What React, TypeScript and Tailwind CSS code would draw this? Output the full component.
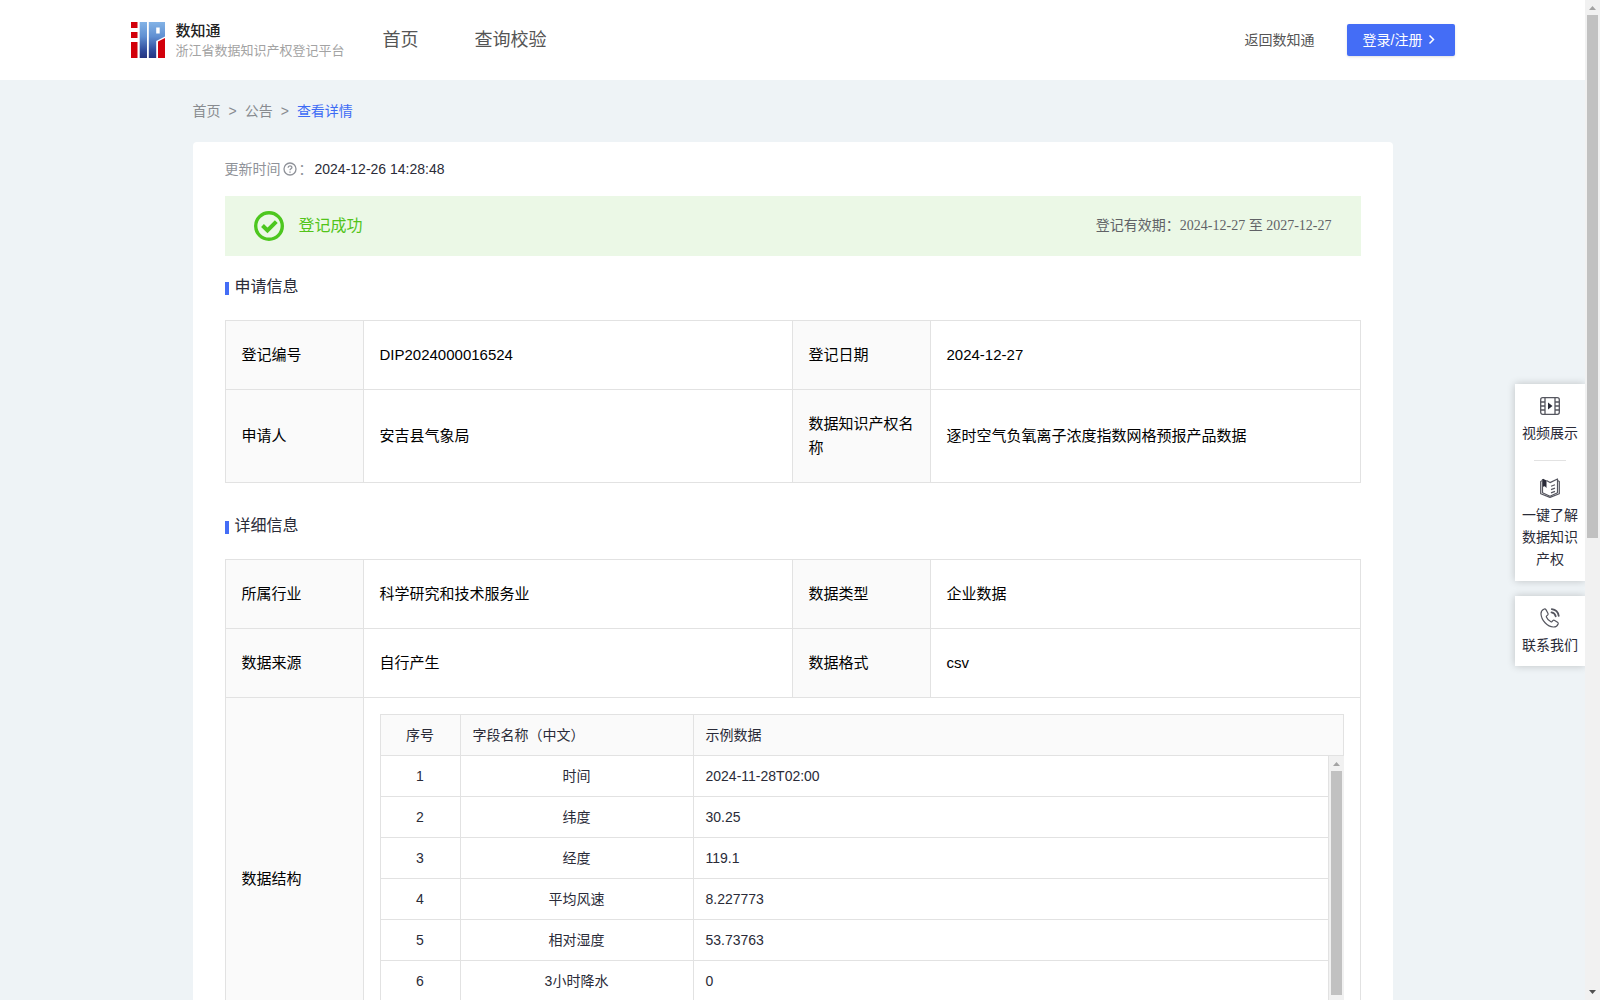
import React from 'react';

const font = "font-['Liberation_Sans','Noto_Sans_CJK_SC',sans-serif]";

function Logo() {
  return (
    <svg viewBox="0 0 34 36" className="h-9 w-[34px] shrink-0" aria-hidden="true">
      <defs>
        <linearGradient id="logoBlue" x1="0" y1="0" x2="0" y2="36" gradientUnits="userSpaceOnUse">
          <stop offset="0" stopColor="#83b3e6" />
          <stop offset="0.4" stopColor="#6090d2" />
          <stop offset="0.8" stopColor="#2f4a9b" />
          <stop offset="1" stopColor="#24337f" />
        </linearGradient>
      </defs>
      <path d="M0 0h6.500v6H0zM0 10h6.500v6H0zM0 20h6.500v16H0z" fill="#d2000b" />
      <path d="M8.700 0h7.300v36H8.700z" fill="url(#logoBlue)" />
      <path fillRule="evenodd" d="M17.800 0H34v14.500L25.200 19v17h-7.400zM25.200 5.500v6h3.500V5.500z" fill="url(#logoBlue)" />
      <path d="M27 19.500l7-3.500v20h-7z" fill="#d2000b" />
    </svg>
  );
}

function QuestionIcon() {
  return (
    <svg viewBox="0 0 14 14" className="h-3.5 w-3.5 shrink-0" fill="none" stroke="#8f9299" strokeWidth="1.300" aria-hidden="true">
      <circle cx="7" cy="7" r="6" />
      <path d="M5.100 5.700c0-2.400 3.800-2.400 3.800-.2 0 1.300-1.900 1.300-1.900 2.700" />
      <path d="M7 9.400v1.300" />
    </svg>
  );
}

function SuccessIcon() {
  return (
    <svg viewBox="0 0 30 30" className="h-[30px] w-[30px] shrink-0" fill="none" stroke="#4dc71f" aria-hidden="true">
      <circle cx="15" cy="15" r="13.300" strokeWidth="3.400" />
      <path d="M8.500 14.500l5 5 8.800-8.800" strokeWidth="4" />
    </svg>
  );
}

function FilmIcon() {
  return (
    <svg viewBox="0 0 20 20" className="h-5 w-5" fill="none" stroke="#55565f" strokeWidth="1.300" aria-hidden="true">
      <rect x="0.700" y="1.700" width="18.600" height="16.600" rx="2" />
      <path d="M5 1.700v16.600M15 1.700v16.600M0.700 6H5M0.700 10H5M0.700 14H5M15 6h4.300M15 10h4.300M15 14h4.300" />
      <path d="M8 6.500v7l4.500-3.500z" fill="#2a2b38" stroke="none" />
    </svg>
  );
}

function BookIcon() {
  return (
    <svg viewBox="0 0 20 20" className="h-5 w-5" fill="none" stroke="#55565f" strokeWidth="1.200" strokeLinejoin="round" aria-hidden="true">
      <path d="M6.500 2.600l3.500 2L17.500 1v13.800L10 18.200l-7.500-3.500V1" />
      <path d="M2.500 2.500L.7 3.500v12.200L10 19.400l9.300-3.700V3.500l-1.800-1" />
      <path d="M11 8.300l4-1.500M11 11.600l4-1.500M11 14.900l4-1.500" />
      <path d="M3 .8l3.500 1.700V10L4.800 8.300 3 8.700z" fill="#2a2b38" stroke="none" />
    </svg>
  );
}

function PhoneIcon() {
  return (
    <svg viewBox="0 0 20 20" className="h-5 w-5" fill="none" stroke="#55565f" strokeWidth="1.200" strokeLinecap="round" strokeLinejoin="round" aria-hidden="true">
      <path d="M3.800 1.200C2 2 .9 3.800 1 6c.4 6.500 6.300 12.600 12.400 13 2.300.1 4-1 4.700-3 .2-.7 0-1.400-.6-1.800l-2.800-1.800c-.6-.4-1.400-.3-1.900.2l-.8.900c-.3.300-.7.400-1.100.2-2-.9-3.700-2.700-4.500-4.700-.2-.4 0-.8.300-1.100l.9-.8c.5-.5.600-1.200.3-1.800L6.100 1.900c-.5-.8-1.400-1.100-2.300-.7z" />
      <path d="M11.500 4.300c2.200.4 3.700 1.800 4.200 4M11.800 1.200c3.700.5 6.300 3 6.900 6.600" strokeWidth="1.800" />
    </svg>
  );
}

function ScrollTrack({ className, thumb, down }: { className: string; thumb: string; down?: boolean }) {
  return (
    <div className={`flex w-[15px] shrink-0 flex-col items-center bg-[#f1f1f1] ${className}`} aria-hidden="true">
      <svg viewBox="0 0 15 15" className="h-[15px] w-[15px] shrink-0"><path d="M4 10h7L7.500 6z" fill="#a3a3a3" /></svg>
      <div className={`w-[11px] bg-[#c1c1c1] ${thumb}`} />
      {down && (
        <svg viewBox="0 0 15 15" className="mt-auto h-[15px] w-[15px] shrink-0"><path d="M4 5h7L7.500 9z" fill="#505050" /></svg>
      )}
    </div>
  );
}

function SectionTitle({ children }: { children: React.ReactNode }) {
  return (
    <h2 className="flex h-6 items-center text-base leading-6 text-[#2a2b38]">
      <span className="mt-0.5 mr-1.5 h-[13px] w-1 bg-[#446df6]" />
      {children}
    </h2>
  );
}

const line = 'border border-[#e2e2e2]';

function Columns() {
  return (
    <colgroup>
      <col className="w-[138px]" />
      <col className="w-[429px]" />
      <col className="w-[138px]" />
      <col />
    </colgroup>
  );
}

function InfoRow({ cells, tall }: { cells: string[]; tall?: boolean }) {
  return (
    <tr className={tall ? 'h-[93px]' : 'h-[69px]'}>
      {cells.map((text, i) =>
        i % 2 === 0 ? (
          <th key={i} scope="row" className={`${line} bg-[#fafafa] px-4 text-left font-normal`}>{text}</th>
        ) : (
          <td key={i} className={`${line} px-4`}>{text}</td>
        ),
      )}
    </tr>
  );
}

const fields = [
  ['1', '时间', '2024-11-28T02:00'],
  ['2', '纬度', '30.25'],
  ['3', '经度', '119.1'],
  ['4', '平均风速', '8.227773'],
  ['5', '相对湿度', '53.73763'],
  ['6', '3小时降水', '0'],
];

const infoTable = 'w-full table-fixed border-collapse text-[15px] leading-6 text-black';
const fieldTable = 'w-full table-fixed border-collapse text-sm leading-5 text-[#2a2b38]';

function FieldColumns() {
  return (
    <colgroup>
      <col className="w-20" />
      <col className="w-[233px]" />
      <col />
    </colgroup>
  );
}

function StructureTable() {
  return (
    <div>
      <table className={fieldTable}>
        <FieldColumns />
        <thead>
          <tr className="h-[41px] bg-[#fafafa]">
            <th className={`${line} font-normal`}>序号</th>
            <th className={`${line} px-3 text-left font-normal`}>字段名称（中文）</th>
            <th className={`${line} px-3 text-left font-normal`}>示例数据</th>
          </tr>
        </thead>
      </table>
      <div className="flex h-[288px]">
        <div className="min-w-0 flex-1">
          <table className={`${fieldTable} -mt-px`}>
            <FieldColumns />
            <tbody>
              {fields.map(([no, name, sample]) => (
                <tr key={no} className="h-[41px]">
                  <td className={`${line} text-center`}>{no}</td>
                  <td className={`${line} px-3 text-center`}>{name}</td>
                  <td className={`${line} px-3`}>{sample}</td>
                </tr>
              ))}
            </tbody>
          </table>
        </div>
        <ScrollTrack className="" thumb="h-56" />
      </div>
    </div>
  );
}

export default function App() {
  return (
    <div className={`flex h-screen overflow-hidden bg-[#eef3f6] ${font}`}>
      <div className="relative min-w-0 flex-1 overflow-hidden">
        <header className="bg-white">
          <div className="mx-auto flex h-20 max-w-[1324px] items-center">
            <Logo />
            <div className="ml-[11px] w-[170px] whitespace-nowrap font-['Noto_Sans_CJK_SC',sans-serif]">
              <div className="text-[15px] leading-5 font-medium text-[#222]">数知通</div>
              <div className="text-[13px] leading-5 text-[#a3a3a3]">浙江省数据知识产权登记平台</div>
            </div>
            <nav className="ml-[37px] flex gap-14 text-lg leading-6 text-[#555]">
              <a href="#home">首页</a>
              <a href="#verify">查询校验</a>
            </nav>
            <a href="#back" className="mr-8 ml-auto text-sm text-[#555]">返回数知通</a>
            <button type="button" className="flex h-8 w-[108px] items-center gap-1 rounded-xs bg-[#446df6] pl-4 text-sm text-white shadow-sm">
              登录/注册
              <svg viewBox="0 0 12 12" className="h-3 w-3" fill="none" stroke="currentColor" strokeWidth="1.500" aria-hidden="true"><path d="M3.500 1.500L7.500 5.500l-4 4" /></svg>
            </button>
          </div>
        </header>

        <main className="mx-auto max-w-[1200px]">
          <nav className="flex h-[62px] items-center gap-2 text-sm text-[#888b90]">
            <a href="#home">首页</a>
            <span>&gt;</span>
            <a href="#notice">公告</a>
            <span>&gt;</span>
            <a href="#detail" className="text-[#3d6bf5]">查看详情</a>
          </nav>

          <section className="rounded bg-white px-8 pt-[15px] pb-8">
            <div className="flex h-[39px] items-start text-sm leading-6">
              <span className="flex items-center gap-0.5 text-[#8f9299]">更新时间<QuestionIcon />：</span>
              <time className="ml-0.5 text-[#2a2b38]">2024-12-26 14:28:48</time>
            </div>

            <div className="flex h-[60px] items-center bg-[#ebf8e6] px-[29px]">
              <SuccessIcon />
              <span className="ml-[15px] text-base text-[#52c41a]">登记成功</span>
              <span className="ml-auto font-['Liberation_Serif','Noto_Sans_CJK_SC',serif] text-sm text-[#606266]">登记有效期：2024-12-27 至 2027-12-27</span>
            </div>

            <div className="pt-[19px] pb-[21px]"><SectionTitle>申请信息</SectionTitle></div>
            <table className={infoTable}>
              <Columns />
              <tbody>
                <InfoRow cells={['登记编号', 'DIP2024000016524', '登记日期', '2024-12-27']} />
                <InfoRow tall cells={['申请人', '安吉县气象局', '数据知识产权名称', '逐时空气负氧离子浓度指数网格预报产品数据']} />
              </tbody>
            </table>

            <div className="pt-[31px] pb-[21px]"><SectionTitle>详细信息</SectionTitle></div>
            <table className={infoTable}>
              <Columns />
              <tbody>
                <InfoRow cells={['所属行业', '科学研究和技术服务业', '数据类型', '企业数据']} />
                <InfoRow cells={['数据来源', '自行产生', '数据格式', 'csv']} />
                <tr>
                  <th scope="row" className={`${line} bg-[#fafafa] px-4 text-left font-normal`}>数据结构</th>
                  <td colSpan={3} className={`${line} p-4`}><StructureTable /></td>
                </tr>
              </tbody>
            </table>
          </section>
        </main>

        <aside className="absolute top-[384px] right-0 flex w-[70px] flex-col gap-[15px] text-center text-sm leading-[22px] text-[#2a2b38]">
          <div className="flex flex-col items-center bg-white px-1.5 pt-3 pb-[11px] shadow-[0_0_8px_rgba(0,0,0,0.2)]">
            <a href="#video" className="flex flex-col items-center gap-1.5 whitespace-nowrap"><FilmIcon />视频展示</a>
            <span className="mt-4 mb-[17px] h-px w-8 bg-[#e2e2e2]" />
            <a href="#guide" className="flex w-14 flex-col items-center gap-1.5"><BookIcon />一键了解数据知识产权</a>
          </div>
          <div className="flex flex-col items-center bg-white px-1.5 pt-3 pb-2.5 shadow-[0_0_8px_rgba(0,0,0,0.2)]">
            <a href="#contact" className="flex flex-col items-center gap-1.5 whitespace-nowrap"><PhoneIcon />联系我们</a>
          </div>
        </aside>
      </div>
      <ScrollTrack className="h-full" thumb="h-[523px]" down />
    </div>
  );
}
